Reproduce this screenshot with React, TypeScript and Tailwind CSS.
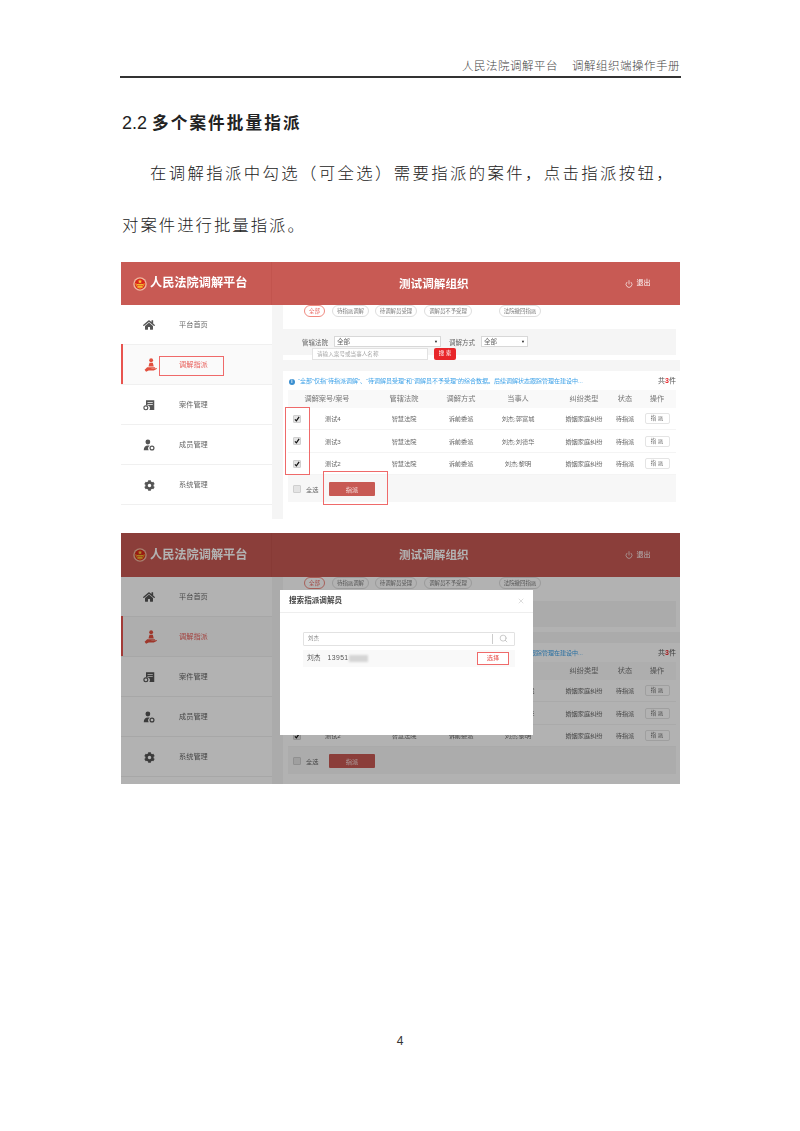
import React from 'react';
import { FaHome, FaCog } from 'react-icons/fa';
import { Power, Search, X } from 'lucide-react';

const rows = [
  { id: '测试4', party: '刘杰;郭富城' },
  { id: '测试3', party: '刘杰;刘德华' },
  { id: '测试2', party: '刘杰;黎明' },
];

const tabs = [
  { label: '全部', width: 'w-[21px]', ml: 'ml-0', active: true },
  { label: '待指派调解', width: 'w-[37px]', ml: 'ml-[7px]', active: false },
  { label: '待调解员受理', width: 'w-[42px]', ml: 'ml-[6px]', active: false },
  { label: '调解员不予受理', width: 'w-[48px]', ml: 'ml-[7px]', active: false },
  { label: '法院撤回指派', width: 'w-[42px]', ml: 'ml-[27px]', active: false },
];

const Emblem = () => (
  <svg viewBox="0 0 28 28" className="w-[14px] h-[14px] shrink-0">
    <circle cx="14" cy="14" r="13.5" fill="#eeb9a0" />
    <circle cx="14" cy="14" r="10.8" fill="#d9261c" />
    <path d="M14 4.5l1.3 3.2h3.2l-2.6 2 1 3.2-2.9-2-2.9 2 1-3.2-2.6-2h3.2z" fill="#f7c531" />
    <path d="M7 14h14v2.5H7zM9 17.5h10v4H9z" fill="#f5b82e" />
    <path d="M5.5 12c0 5 3 9.500 8.500 10.500C19.500 21.500 22.500 17 22.500 12" fill="none" stroke="#f2a529" strokeWidth="1.600" />
  </svg>
);

const HandIcon = () => (
  <svg viewBox="0 0 16 16" className="w-[14px] h-[14px]" fill="currentColor">
    <circle cx="9.300" cy="2.600" r="2.200" />
    <path d="M7.400 5.400h3.800l1.100 4.400H6.300z" />
    <path d="M5.500 10.600h7.800c.8 0 .8 1.300 0 1.300H9.800c-.4 0-.4.500 0 .5h3.300l1.900-.9c.8-.3 1.200.6.600 1l-3.300 1.900H6.500l-3 1.300-1.700-2.300 1.300-1.100c.7-1 1.400-1.700 2.400-1.700z" />
  </svg>
);

const CaseIcon = () => (
  <svg viewBox="0 0 16 16" className="w-[12px] h-[12px]" fill="currentColor">
    <path d="M4 1.500h11v13H8.500a3.600 3.600 0 0 0-2-5.800L4 8.600z" />
    <path d="M6 4h7v1H6zM6 6.500h7v1H6z" fill="#fff" />
    <circle cx="3.800" cy="11.800" r="2.600" fill="none" stroke="currentColor" strokeWidth="1.500" />
  </svg>
);

const MemberIcon = () => (
  <svg viewBox="0 0 16 16" className="w-[12px] h-[12px]" fill="currentColor">
    <circle cx="6.500" cy="4" r="3.200" />
    <path d="M1 15c0-4 2-6.500 5.500-6.500 1 0 1.800.2 2.500.6A4.200 4.200 0 0 0 7.600 15z" />
    <circle cx="12" cy="12" r="2.600" fill="none" stroke="currentColor" strokeWidth="1.600" />
  </svg>
);

const Checkbox = ({ checked }: { checked: boolean }) => (
  <span className="w-[8px] h-[8px] shrink-0 rounded-[1px] bg-[#e4e4e4] border border-[#cfcfcf] flex items-center justify-center">
    {checked && (
      <svg viewBox="0 0 10 10" className="w-[8px] h-[8px]">
        <path d="M1.500 5.500 4 8l4.500-6.500" fill="none" stroke="#111" strokeWidth="2" />
      </svg>
    )}
  </span>
);

const Sidebar = () => (
  <div className="w-[151px] shrink-0 bg-white text-[7.2px] text-[#666]">
    <NavItem icon={<FaHome className="w-[12px] h-[12px]" />} label="平台首页" />
    <NavItem icon={<HandIcon />} label="调解指派" active />
    <NavItem icon={<CaseIcon />} label="案件管理" />
    <NavItem icon={<MemberIcon />} label="成员管理" />
    <NavItem icon={<FaCog className="w-[11px] h-[11px]" />} label="系统管理" />
  </div>
);

const NavItem = ({ icon, label, active = false }: { icon: React.ReactNode; label: string; active?: boolean }) => (
  <div className={`h-[40px] pt-[2px] flex items-center border-b border-[#f0f0f0] ${active ? 'bg-[#fafafa] text-[#e8615c]' : 'text-[#666]'}`}>
    {active && <span className="w-[2px] -mt-[2px] h-[40px] bg-[#e8544f] shrink-0" />}
    <span className={`flex justify-center pr-[2px] ${active ? 'w-[56px] text-[#e2503f]' : 'w-[58px] text-[#555]'}`}>{icon}</span>
    <span>{label}</span>
  </div>
);

const Filters = () => (
  <div className="h-[55px] bg-white">
    <div className="h-[24px] flex pl-[21px]">
      {tabs.map((t) => (
        <span
          key={t.label}
          className={`h-[12px] pt-px rounded-full border flex items-center justify-center text-[5.4px] ${t.width} ${t.ml} ${t.active ? 'border-[#f08a80] text-[#e8615c]' : 'border-[#dedede] text-[#777]'}`}
        >
          {t.label}
        </span>
      ))}
    </div>
    <div className="h-[26px] mr-[4px] bg-[#f5f5f5] pt-[7px] pl-[19px] flex items-start text-[6.5px] text-[#666]">
      <span className="w-[26px] h-[11px] pt-px leading-[11px] whitespace-nowrap">管辖法院</span>
      <span className="ml-[6px] w-[107px] h-[11px] pt-px bg-white border border-[#d8d8d8] flex items-center justify-between px-[2px]">
        全部<i className="text-[4px] not-italic text-[#222]">▼</i>
      </span>
      <span className="ml-[8px] w-[26px] h-[11px] pt-px leading-[11px] whitespace-nowrap">调解方式</span>
      <span className="ml-[6px] w-[47px] h-[11px] pt-px bg-white border border-[#d8d8d8] flex items-center justify-between px-[2px]">
        全部<i className="text-[4px] not-italic text-[#222]">▼</i>
      </span>
    </div>
    <div className="relative -mt-[7px] ml-[29px] flex">
      <span className="w-[116px] h-[12px] bg-white border border-[#e2e2e2] pl-[4px] text-[5.6px] leading-[10px] text-[#aaa]">请输入案号或当事人名称</span>
      <span className="ml-[6px] w-[22px] h-[12px] rounded-[2px] bg-[#e8262a] text-white text-[5.6px] flex items-center justify-center">搜 索</span>
    </div>
  </div>
);

const Table = () => (
  <div className="flex-1 bg-white">
    <div className="h-[19px] pt-[3px] flex items-center pl-[6px] pr-[4px] text-[6px] text-[#3aa0e8]">
      <span className="w-[6px] h-[6px] rounded-full bg-[#3b8fd0] text-white text-[4.5px] leading-[6px] text-center font-bold shrink-0">i</span>
      <span className="ml-[3px] whitespace-nowrap">“全部”仅指“待指派调解”、“待调解员受理”和“调解员不予受理”的综合数据。后续调解状态跟踪管理在建设中...</span>
      <span className="ml-auto text-[7px] text-[#555] whitespace-nowrap">共<b className="text-[#e8262a]">3</b>件</span>
    </div>
    <div className="ml-[5px] mr-[4px]">
      <div className="h-[18px] pt-px bg-[#f9f9f9] grid grid-cols-[78px_76px_38px_76px_56px_26px_38px] items-center text-center text-[7.2px] text-[#777] whitespace-nowrap">
        <span>调解案号/案号</span>
        <span>管辖法院</span>
        <span>调解方式</span>
        <span>当事人</span>
        <span>纠纷类型</span>
        <span>状态</span>
        <span>操作</span>
      </div>
      {rows.map((r) => (
        <div key={r.id} className="h-[22.6px] pt-px border-b border-[#f4f4f4] grid grid-cols-[78px_76px_38px_76px_56px_26px_38px] items-center text-center text-[6.2px] text-[#666] whitespace-nowrap">
          <span className="flex items-center pl-[5px]">
            <Checkbox checked />
            <span className="ml-[24px]">{r.id}</span>
          </span>
          <span>智慧法院</span>
          <span>诉前委派</span>
          <span>{r.party}</span>
          <span>婚姻家庭纠纷</span>
          <span>待指派</span>
          <span className="flex justify-center">
            <span className="w-[25px] h-[11px] border border-[#e4e4e4] rounded-[2px] bg-white text-[5.4px] leading-[9px]">指 派</span>
          </span>
        </div>
      ))}
      <div className="h-[27px] pt-px bg-[#f7f7f7] flex items-center pl-[5px] text-[6.2px] text-[#666]">
        <Checkbox checked={false} />
        <span className="ml-[5px] w-[12px] whitespace-nowrap">全选</span>
        <span className="ml-[11px] w-[46px] h-[14px] rounded-[1px] bg-[#c85a54] text-white/80 flex items-center justify-center">指派</span>
      </div>
    </div>
  </div>
);

const Modal = () => (
  <div className="absolute left-[159px] top-[57px] w-[253px] h-[145px] bg-white">
    <div className="h-[23px] border-b border-[#eee] flex items-center justify-between pl-[9px] pr-[8px] text-[7.6px] font-bold text-[#444]">
      搜索指派调解员
      <X className="w-[8px] h-[8px] text-[#ccc]" />
    </div>
    <div className="mt-[19px] ml-[23px] mr-[18px] h-[14px] border border-[#e2e2e2] rounded-[1px] flex items-center pl-[4px] text-[5.4px] text-[#888]">
      刘杰
      <span className="ml-auto w-[22px] h-[10px] border-l border-[#ccc] flex items-center justify-center">
        <Search className="w-[9px] h-[9px] text-[#bbb]" />
      </span>
    </div>
    <div className="mt-[4px] ml-[23px] mr-[18px] h-[17px] bg-[#f9f9f9] flex items-center pl-[4px] text-[6.8px] text-[#555]">
      <span>刘杰</span>
      <span className="ml-[7px] tracking-[0.4px] font-['Liberation_Sans',sans-serif]">13951</span>
      <span className="w-[19px] h-[7px] bg-[#d5d5d5] blur-[1px]" />
      <span className="ml-auto mr-[6px] w-[32px] h-[13px] border-[1.5px] border-[#ef6a6a] bg-white text-[#e8544f] text-[6.2px] flex items-center justify-center">选择</span>
    </div>
  </div>
);

const Screen = ({ dimmed = false }: { dimmed?: boolean }) => (
  <div className={`relative ml-px w-[559px] overflow-hidden blur-[0.45px] ${dimmed ? 'h-[251px]' : 'h-[257px]'}`}>
    <div className={`flex bg-[#c85a54] text-white ${dimmed ? 'h-[44px]' : 'h-[43px]'}`}>
      <div className="w-[151px] shrink-0 pt-px border-r border-[#c2544e] flex items-center pl-[12px]">
        <Emblem />
        <span className="ml-[3px] text-[12.2px] font-bold whitespace-nowrap">人民法院调解平台</span>
      </div>
      <div className="flex-1 pt-px flex items-center pl-[127px]">
        <span className="text-[11.6px] font-bold whitespace-nowrap">测试调解组织</span>
        <Power className="ml-[156px] w-[8px] h-[8px]" />
        <span className="ml-[4px] text-[7px] whitespace-nowrap">退出</span>
      </div>
    </div>
    <div className="flex h-[214px] bg-[#f5f5f5]">
      <Sidebar />
      <div className="ml-[11px] flex-1 flex flex-col">
        <Filters />
        <div className="h-[11px] bg-[#f5f5f5]" />
        <Table />
      </div>
    </div>
    {!dimmed && (
      <>
        <span className="absolute left-[38px] top-[94px] w-[65px] h-[20px] border-[1.5px] border-[#ef6a6a]" />
        <span className="absolute left-[164px] top-[145px] w-[25px] h-[68px] border-[1.5px] border-[#ef6a6a]" />
        <span className="absolute left-[202px] top-[209px] w-[65px] h-[34px] border-[1.5px] border-[#ef6a6a]" />
      </>
    )}
    {dimmed && (
      <>
        <div className="absolute inset-0 bg-black/30" />
        <Modal />
      </>
    )}
  </div>
);

export default function App() {
  return (
    <div className="w-[800px] h-[1131px] bg-white overflow-hidden px-[120px] font-['Liberation_Sans','Noto_Sans_CJK_SC',sans-serif] text-[#222]">
      <div className="pt-[58px] h-[76px] text-right text-[11.5px] leading-[16px] tracking-[0.5px] font-light text-[#444] whitespace-nowrap">
        人民法院调解平台<span className="ml-[14px]">调解组织端操作手册</span>
      </div>
      <div className="h-[1.5px] bg-[#333] w-[561px]" />
      <h1 className="mt-[33px] pl-[2px] text-[16.6px] leading-[24px] font-bold tracking-[2.1px] whitespace-nowrap">
        <span className="font-normal tracking-normal text-[18px] mr-[5px]">2.2</span>多个案件批量指派
      </h1>
      <div className="mt-[11px] pl-[2px] text-[16.4px] leading-[52px] tracking-[2px] font-light whitespace-nowrap">
        <p className="pl-[28px] tracking-[2.36px]">在调解指派中勾选（可全选）需要指派的案件，点击指派按钮，</p>
        <p>对案件进行批量指派。</p>
      </div>
      <div className="mt-[11px]">
        <Screen />
      </div>
      <div className="mt-[14px]">
        <Screen dimmed />
      </div>
      <div className="mt-[249px] text-center text-[12px] leading-[16px] text-[#333]">4</div>
    </div>
  );
}
